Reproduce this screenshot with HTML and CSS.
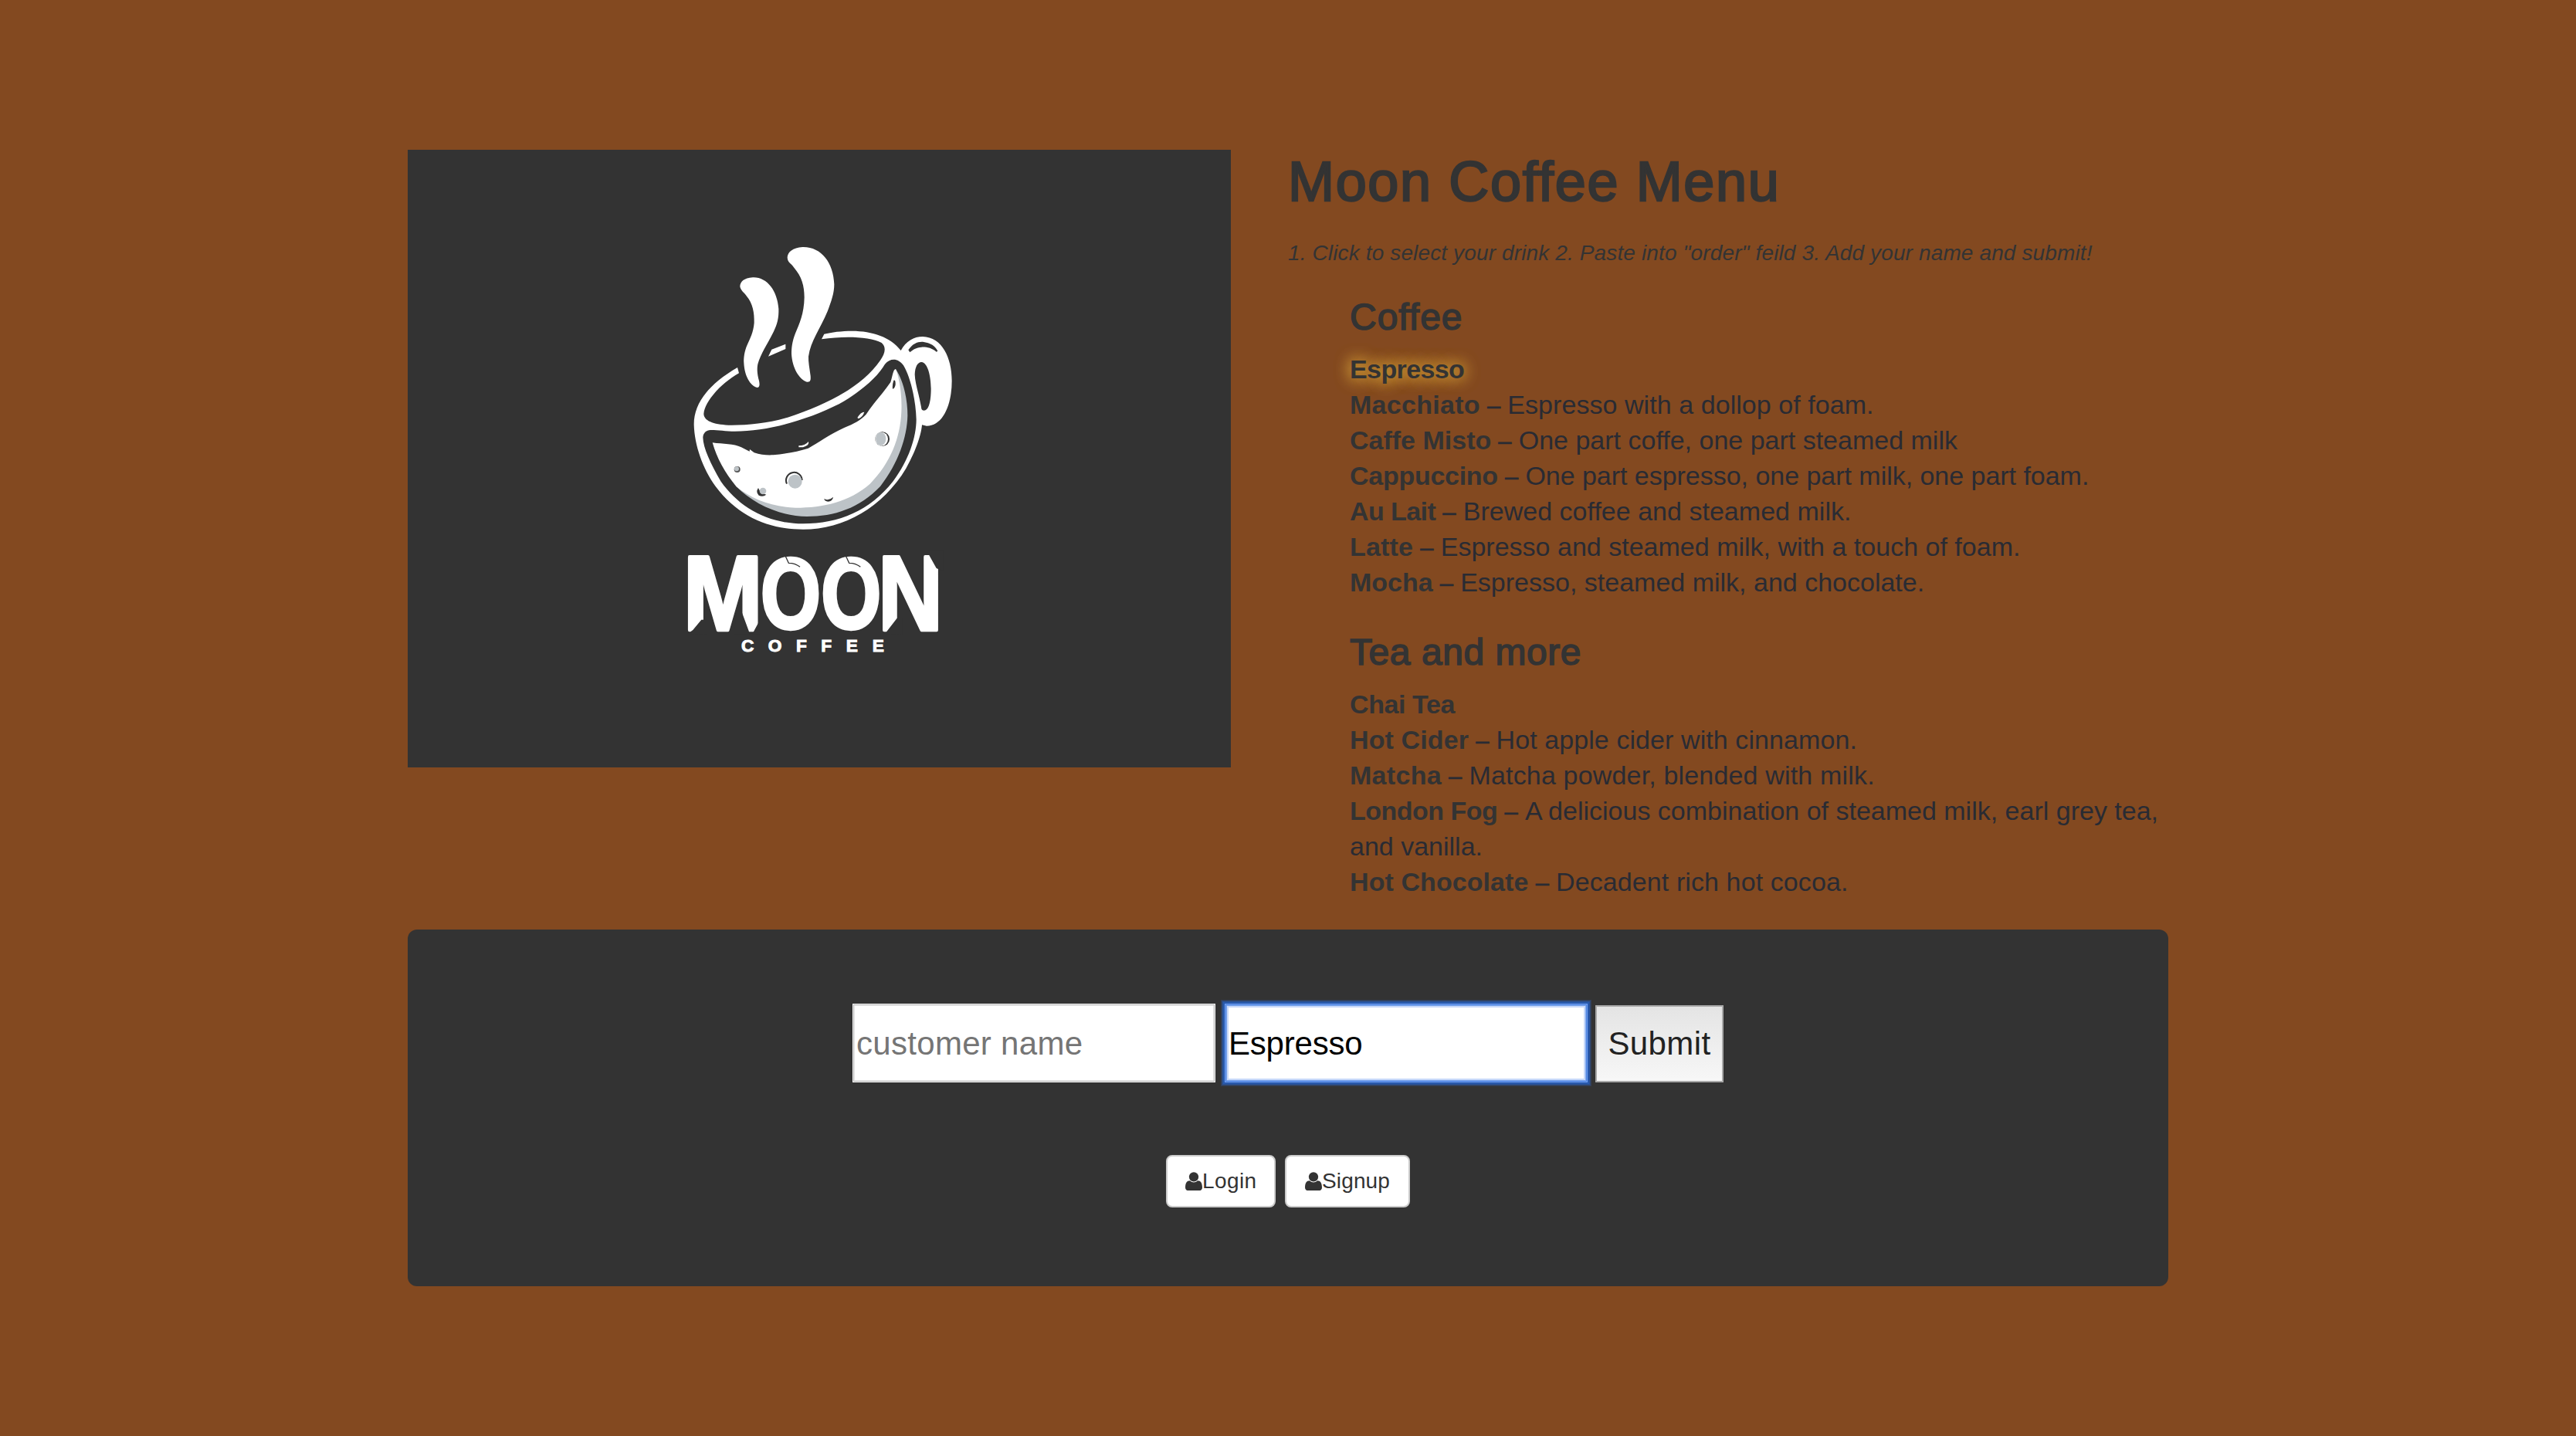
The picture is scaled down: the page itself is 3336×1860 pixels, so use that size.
FILE: index.html
```html
<!DOCTYPE html>
<html lang="en">
<head>
<meta charset="utf-8">
<title>Moon Coffee Menu</title>
<link rel="stylesheet" href="styles.css">
</head>
<body>
<main class="container">
  <div class="row">
    <section class="brand">
      <svg class="logo" viewBox="528 194 1066 800" role="img" aria-label="Moon Coffee">
        <g transform="translate(860 290) scale(.33333)">
          <!-- cup outline and handle -->
          <path fill="#fff" d="M285 558C170 625 115 700 116 780C118 860 150 950 200 1020C290 1140 410 1187 540 1187C700 1187 850 1100 940 950C985 870 1000 810 1002 781L1020 785C1085 785 1118 700 1118 610C1118 520 1080 440 1005 438C970 438 940 455 920 492C880 440 810 416 730 416C690 416 650 421 622 428L612 448C700 435 800 438 845 462C865 480 858 505 840 530C770 630 640 700 480 752C400 776 320 783 250 782C190 779 155 765 154 738C158 690 220 620 291 580Z"/>
          <path fill="#fff" d="M418 488L472 467V486L405 515Z"/>
          <path fill="#333" d="M180 801C200 800 240 806 275 806C400 806 550 765 680 700C760 655 830 595 858 545C880 520 910 522 930 550C955 590 978 680 980 760C980 830 950 920 890 1000C800 1115 680 1165 540 1165C400 1165 290 1100 220 1000C180 930 152 870 151 830C152 812 165 801 180 801Z"/>
          <path fill="#333" d="M1000 537C1025 540 1036 590 1037 640C1037 690 1028 725 1010 725C1000 724 1000 720 999 712C990 660 975 620 974 585C975 555 985 538 1000 537Z"/>
          <path fill="#333" d="M949 490C965 465 985 457 1005 458C1035 462 1055 475 1063 494L1058 497C1040 482 1020 478 1000 479C980 480 965 490 955 499Z"/>
          <!-- moon -->
          <path fill="#bdc3c7" d="M280 1020L500 1000L850 850L900 565C930 610 946 680 946 745C944 830 910 930 840 1020C760 1105 660 1137 555 1137C450 1135 350 1090 280 1020Z"/>
          <path fill="#fff" d="M188 850C230 856 270 853 300 868L332 884L333 876L350 889C375 898 400 899 425 898C470 893 520 885 560 872C600 850 640 820 700 792C740 775 760 765 785 740C810 700 850 660 880 615C888 590 890 565 900 564C915 600 925 670 922 730C918 830 880 930 800 1010C720 1080 620 1103 510 1103C420 1100 340 1070 280 1020C235 965 205 910 188 850Z"/>
          <path fill="#fff" d="M523 862Q548 862 561 846Q566 860 540 868L523 868ZM751 753Q765 730 778 731Q772 750 755 757Z"/>
          <path fill="#333" d="M892 608Q900 604 899 625Q897 640 888 641Q886 625 892 608ZM622 1068Q640 1078 657 1061Q655 1078 637 1079Q623 1078 622 1068Z"/>
          <!-- craters -->
          <circle cx="848" cy="836" r="28" fill="#333"/><ellipse cx="845" cy="836" rx="25" ry="27" fill="#fff"/><ellipse cx="842" cy="835" rx="20" ry="26" fill="#bdc3c7"/>
          <path fill="none" stroke="#333" stroke-width="6" d="M477 1010A31 31 0 1 1 536 996"/><circle cx="509" cy="1001" r="27" fill="#bdc3c7"/>
          <circle cx="284" cy="954" r="12" fill="#555"/><circle cx="282" cy="952" r="9" fill="#bdc3c7"/>
          <path fill="#333" d="M366 1026Q355 1042 368 1055Q384 1063 397 1052Q374 1048 366 1026Z"/><ellipse cx="384" cy="1038" rx="13" ry="13" fill="#bdc3c7"/>
          <!-- steam -->
          <path fill="#fff" d="M538 90C500 92 480 110 479 130C480 150 490 150 505 170C535 205 545 240 545 285C544 350 525 390 510 425C498 455 495 480 495 505C498 560 525 605 555 614C570 615 570 605 569 590C565 560 560 535 561 515C570 455 605 410 635 340C650 300 661 270 661 235C658 150 610 88 538 90Z"/>
          <path fill="#fff" d="M345 208C310 210 296 225 295 243C298 260 310 265 320 280C345 310 351 345 350 385C347 420 335 445 323 470C312 495 309 520 310 540C312 590 335 630 362 636C372 635 372 625 369 610C361 580 361 560 364 545C375 505 400 470 425 420C440 390 446 365 445 330C440 260 400 206 345 208Z"/>
        </g>
        <g transform="translate(860 690) scale(.33333)" fill="#fff">
          <g class="wordmark">
            <text transform="translate(74 378) scale(.95 1.05)">M</text>
            <text transform="translate(375 372) scale(.77 1)">O</text>
            <text transform="translate(610 372) scale(.77 1)">O</text>
            <text transform="translate(832 378) scale(.89 1.06)">N</text>
          </g>
          <!-- brush notches -->
          <path fill="#333" d="M92 393L112 378L145 338H165V395ZM288 270L334 395H270ZM342 395L372 340V395ZM858 393L905 332H925V395ZM1020 70H1085V150L1058 138Z"/>
          <path fill="none" stroke="#333" stroke-width="4" d="M470 88L484 118Q510 118 528 133M705 88L719 118Q745 118 763 133"/>
          <text class="tagline" y="463" x="300 404 513 610 707 809">COFFEE</text>
        </g>
      </svg>
    </section>
    <section class="menu">
      <h1>Moon Coffee Menu</h1>
      <p class="steps">1. Click to select your drink 2. Paste into "order" feild 3. Add your name and submit!</p>
      <h2>Coffee</h2>
      <ul class="drinks">
        <li class="selected"><strong>Espresso</strong></li>
        <li class="macchiato"><strong>Macchiato</strong><i>–</i><span>Espresso with a dollop of foam.</span></li>
        <li><strong>Caffe Misto</strong><i>–</i><span>One part coffe, one part steamed milk</span></li>
        <li class="cappuccino"><strong>Cappuccino</strong><i>–</i><span>One part espresso, one part milk, one part foam.</span></li>
        <li class="au-lait"><strong>Au Lait</strong><i>–</i><span>Brewed coffee and steamed milk.</span></li>
        <li class="latte"><strong>Latte</strong><i>–</i><span>Espresso and steamed milk, with a touch of foam.</span></li>
        <li><strong>Mocha</strong><i>–</i><span>Espresso, steamed milk, and chocolate.</span></li>
      </ul>
      <h2 class="tea">Tea and more</h2>
      <ul class="drinks">
        <li class="chai"><strong>Chai Tea</strong></li>
        <li class="cider"><strong>Hot Cider</strong><i>–</i><span>Hot apple cider with cinnamon.</span></li>
        <li class="matcha"><strong>Matcha</strong><i>–</i><span>Matcha powder, blended with milk.</span></li>
        <li class="london"><strong>London Fog</strong><i>–</i><span>A delicious combination of steamed milk, earl grey tea,<br>and vanilla.</span></li>
        <li class="chocolate"><strong>Hot Chocolate</strong><i>–</i><span>Decadent rich hot cocoa.</span></li>
      </ul>
    </section>
  </div>
  <section class="panel">
    <form class="order">
      <input class="field" type="text" placeholder="customer name">
      <input class="field focused" type="text" value="Espresso">
      <button class="submit" type="button">Submit</button>
    </form>
    <nav class="account">
      <a class="btn login"><svg class="user" viewBox="0 0 66 73"><circle cx="33" cy="19" r="18.500"/><path d="M18 34C6 34 0 44 0 60C0 68 5 73 14 73H52C61 73 66 68 66 60C66 44 60 34 48 34C38 43 28 43 18 34Z"/></svg>Login</a>
      <a class="btn signup"><svg class="user" viewBox="0 0 66 73"><circle cx="33" cy="19" r="18.500"/><path d="M18 34C6 34 0 44 0 60C0 68 5 73 14 73H52C61 73 66 68 66 60C66 44 60 34 48 34C38 43 28 43 18 34Z"/></svg>Signup</a>
    </nav>
  </section>
</main>
</body>
</html>
```
FILE: styles.css
```css
* { box-sizing: border-box; }

body {
  margin: 0;
  min-height: 1860px;
  background: #834920;
  color: #292b2c;
  font-family: "Liberation Sans", Arial, sans-serif;
  font-size: 34px;
  line-height: 46px;
}

.container { width: 2280px; margin: 0 auto; padding-top: 194px; }
.row { display: grid; grid-template-columns: 1140px 1140px; height: 1010px; }

.logo { display: block; width: 1066px; height: 800px; background: #333; }
.wordmark {
  font-size: 390px;
  font-weight: bold;
  stroke: #fff;
  stroke-width: 13px;
  stroke-linejoin: round;
}
.tagline { font-size: 68px; font-weight: bold; stroke: #fff; stroke-width: 3px; }

.menu { padding-top: 1px; color: #292b33; }
h1, h2 { margin: 0; color: #333; font-weight: normal; }
h1 {
  font-size: 72px;
  line-height: 80px;
  letter-spacing: 1.65px;
  -webkit-text-stroke: 2.4px #333;
}
.steps {
  margin: 33px 0 37px;
  color: #333;
  font-size: 28px;
  font-style: italic;
  line-height: 40px;
  letter-spacing: .13px;
}
h2 {
  padding-left: 80px;
  font-size: 48px;
  line-height: 52px;
  letter-spacing: 1px;
  -webkit-text-stroke: 1.6px #333;
}
h2.tea { margin-top: 42px; letter-spacing: .55px; }

.drinks { margin: 18px 0 0; padding: 0 0 0 80px; list-style: none; white-space: nowrap; }
.drinks strong { color: #333; }
.drinks i {
  display: inline-block;
  width: 35.500px;
  font-size: 31px;
  font-style: normal;
  line-height: 30px;
  text-align: center;
  -webkit-text-stroke: .6px #292b33;
}
.selected strong { letter-spacing: -.6px; text-shadow: 0 0 20px #daa53a, 0 0 20px #daa53a; }
.macchiato strong { letter-spacing: .28px; }
.macchiato span { letter-spacing: .06px; }
.cappuccino strong { letter-spacing: -.27px; }
.cappuccino span { letter-spacing: -.03px; }
.au-lait strong { letter-spacing: -.57px; }
.au-lait span { letter-spacing: .02px; }
.latte strong { letter-spacing: .2px; }
.latte span { letter-spacing: .01px; }
.chai strong { letter-spacing: -.4px; }
.cider strong { letter-spacing: .12px; }
.cider span { letter-spacing: .08px; }
.matcha strong { letter-spacing: .3px; }
.matcha span { letter-spacing: .17px; }
.london strong { letter-spacing: -.5px; }
.chocolate strong { letter-spacing: .08px; }
.chocolate span { letter-spacing: .1px; }

.panel {
  display: flex;
  flex-direction: column;
  align-items: center;
  gap: 94px;
  height: 462px;
  padding-top: 96px;
  border-radius: 12px;
  background: #333;
}
.order { display: flex; align-items: flex-end; }
.field {
  width: 470px;
  height: 102px;
  padding: 1px 5px 0;
  border: 0;
  border-radius: 0;
  outline: 0;
  background: #fff;
  box-shadow: inset 0 0 0 1px #fff, inset 0 0 0 2px #b8b8b8, inset 0 0 0 3px #ececec;
  color: #000;
  font: 42px "Liberation Sans", Arial, sans-serif;
  letter-spacing: .3px;
}
.field::placeholder { color: #757575; opacity: 1; }
.focused {
  margin: 0 10px 0 12px;
  letter-spacing: -.2px;
  box-shadow:
    inset 0 0 0 1px #71a0f2,
    inset 0 0 0 2px #4e83de,
    inset 0 0 0 3px #80a9ef,
    inset 0 0 0 5px #c8d9fa,
    0 0 0 2px #2859ac,
    0 0 0 3px #2b5296,
    0 0 0 4px #2f4770,
    0 0 0 5px #323d52;
}
.submit {
  width: 166px;
  height: 100px;
  padding: 0;
  border: 2px solid #a9a9a9;
  border-radius: 0;
  background: linear-gradient(#e4e4e4, #f7f7f7);
  color: #222;
  font: 42px "Liberation Sans", Arial, sans-serif;
  letter-spacing: .4px;
}

.account { display: flex; gap: 12px; }
.btn {
  display: flex;
  align-items: center;
  height: 68px;
  padding-left: 23px;
  border: 2px solid #ccc;
  border-radius: 8px;
  background: #fff;
  color: #333;
  font-size: 28px;
  line-height: 40px;
}
.login { width: 142px; letter-spacing: .4px; }
.signup { width: 162px; padding-left: 24px; letter-spacing: .14px; }
.user { width: 22px; height: 24.300px; fill: #333; }
```
